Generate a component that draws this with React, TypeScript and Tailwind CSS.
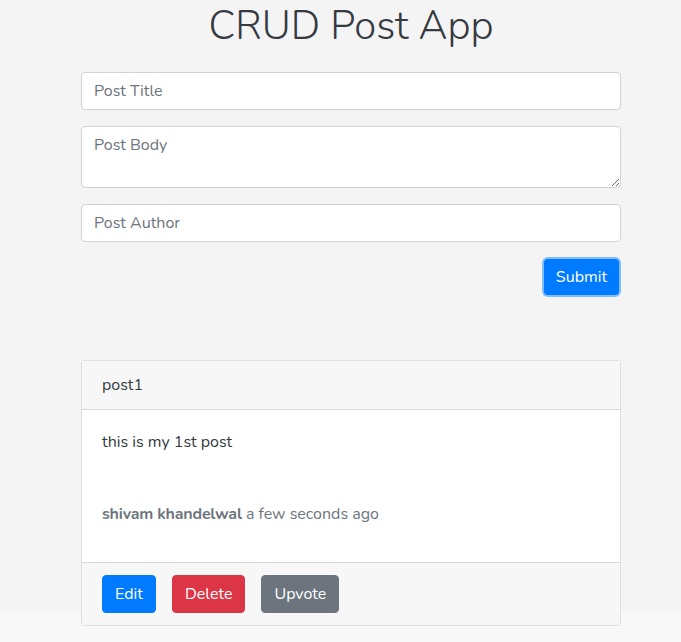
const font = { fontFamily: '"Nunito", "Lato", "Open Sans", sans-serif' };

function Field({ placeholder }: { placeholder: string }) {
  return (
    <input
      type="text"
      placeholder={placeholder}
      className="block h-[38px] w-full rounded border border-[#ced4da] bg-white px-3 text-base text-[#495057] placeholder:text-[#6c757d] outline-none"
    />
  );
}

export default function App() {
  return (
    <div className="min-h-[642px] bg-[#f8f8f8] text-[#212529]" style={font}>
      <div className="h-[612px] bg-[#f4f4f4]">
        <div className="ml-[81px] w-[540px]">
          <h1 className="pt-[2px] mb-[22px] text-center text-[40px] font-light leading-[48px] text-[#343a40]">CRUD Post App</h1>

          <form className="flex flex-col gap-4" onSubmit={(e) => e.preventDefault()}>
            <Field placeholder="Post Title" />
            <textarea
              placeholder="Post Body"
              className="block h-[62px] w-full rounded border border-[#ced4da] bg-white px-3 py-1.5 text-base text-[#495057] placeholder:text-[#6c757d] outline-none"
            />
            <Field placeholder="Post Author" />
            <div className="flex justify-end">
              <button className="mt-[1px] mr-[2px] h-[36px] rounded bg-[#007bff] px-3 text-base text-white ring-2 ring-[#80bdff]">
                Submit
              </button>
            </div>
          </form>

          <div className="mt-[65px] rounded border border-black/[0.125] bg-white">
            <div className="border-b border-black/[0.125] bg-[#f7f7f7] px-5 py-3 leading-6 text-[#343a40]">post1</div>
            <div className="px-5 pt-5 pb-5 leading-6">
              <p className="text-[#343a40]">this is my 1st post</p>
              <p className="mt-[48px] mb-4 text-[#6c757d]">
                <span className="font-bold tracking-[-0.2px]">shivam khandelwal</span> a few seconds ago
              </p>
            </div>
            <div className="flex gap-4 border-t border-black/[0.125] bg-[#f7f7f7] px-5 py-3">
              <button className="h-[38px] rounded border border-[#007bff] bg-[#007bff] px-3 text-white">Edit</button>
              <button className="h-[38px] rounded border border-[#dc3545] bg-[#dc3545] px-3 text-white">Delete</button>
              <button className="h-[38px] rounded border border-[#6c757d] bg-[#6c757d] px-3 text-white">Upvote</button>
            </div>
          </div>
        </div>
      </div>
    </div>
  );
}
